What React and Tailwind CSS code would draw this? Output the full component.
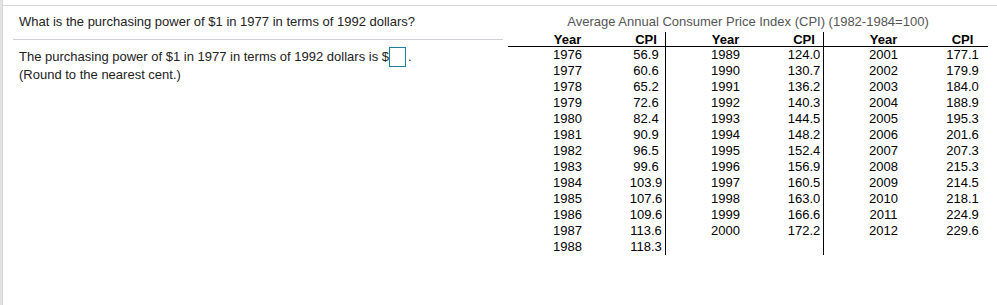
import React from 'react';

// CPI table data, three column groups
const groups = [
  [
    ['1976', '56.9'], ['1977', '60.6'], ['1978', '65.2'], ['1979', '72.6'],
    ['1980', '82.4'], ['1981', '90.9'], ['1982', '96.5'], ['1983', '99.6'],
    ['1984', '103.9'], ['1985', '107.6'], ['1986', '109.6'], ['1987', '113.6'],
    ['1988', '118.3'],
  ],
  [
    ['1989', '124.0'], ['1990', '130.7'], ['1991', '136.2'], ['1992', '140.3'],
    ['1993', '144.5'], ['1994', '148.2'], ['1995', '152.4'], ['1996', '156.9'],
    ['1997', '160.5'], ['1998', '163.0'], ['1999', '166.6'], ['2000', '172.2'],
  ],
  [
    ['2001', '177.1'], ['2002', '179.9'], ['2003', '184.0'], ['2004', '188.9'],
    ['2005', '195.3'], ['2006', '201.6'], ['2007', '207.3'], ['2008', '215.3'],
    ['2009', '214.5'], ['2010', '218.1'], ['2011', '224.9'], ['2012', '229.6'],
  ],
];

const ROWS = 13;

const Row = ({ cells, header }) => (
  <div className={`flex ${header ? 'h-[15px] leading-[15px] font-bold border-b border-black' : 'h-[16px] leading-[16px]'}`}>
    {cells.map((c, i) => (
      <React.Fragment key={i}>
        <div className="w-[119px] text-center">{c[0]}</div>
        <div className={`w-[39px] text-center ${i < 2 ? 'border-r border-black' : ''}`}>{c[1]}</div>
      </React.Fragment>
    ))}
    <div className="w-[6px]" />
  </div>
);

const CpiTable = () => {
  const rows = [];
  for (let r = 0; r < ROWS; r++) {
    rows.push(groups.map((g) => g[r] || ['', '']));
  }
  return (
    <div className="pt-[7px] text-[13px] text-black">
      {/* Title */}
      <div className="h-[18px] leading-[18px] mb-[1px] text-center text-[#555]">
        Average Annual Consumer Price Index (CPI) (1982-1984=100)
      </div>
      <Row header cells={[['Year', 'CPI'], ['Year', 'CPI'], ['Year', 'CPI']]} />
      {rows.map((cells, i) => (
        <Row key={i} cells={cells} />
      ))}
    </div>
  );
};

export default function App() {
  return (
    <div
      className="w-[997px] h-[305px] flex bg-white overflow-hidden"
      style={{ fontFamily: '"Liberation Sans", Arial, sans-serif' }}
    >
      {/* left edge strip */}
      <div className="w-[3px] h-full bg-[#e2e2e2] border-r border-[#d6d6d6]" />

      <div className="flex-1 mt-[5px] border-t border-[#d6d6de]">
        <div className="flex">
          {/* Question panel */}
          <div className="ml-[10px] w-[490px] text-[13px] text-[#222]">
            <div className="pl-[6px] pt-[7px] pb-[8px] leading-[18px] border-b border-[#d0d0d6]">
              What is the purchasing power of $1 in 1977 in terms of 1992 dollars?
            </div>
            <div className="pl-[6px] pt-[8px] leading-[18px]">
              <div className="flex items-center h-[18px]">
                <span>The purchasing power of $1 in 1977 in terms of 1992 dollars is $</span>
                <span className="inline-block w-[17px] h-[20px] border border-[#1b7fa0] bg-white" />
                <span className="ml-[2px]">.</span>
              </div>
              <div>(Round to the nearest cent.)</div>
            </div>
          </div>

          {/* CPI table */}
          <div className="ml-[5px]">
            <CpiTable />
          </div>
        </div>
      </div>
    </div>
  );
}
